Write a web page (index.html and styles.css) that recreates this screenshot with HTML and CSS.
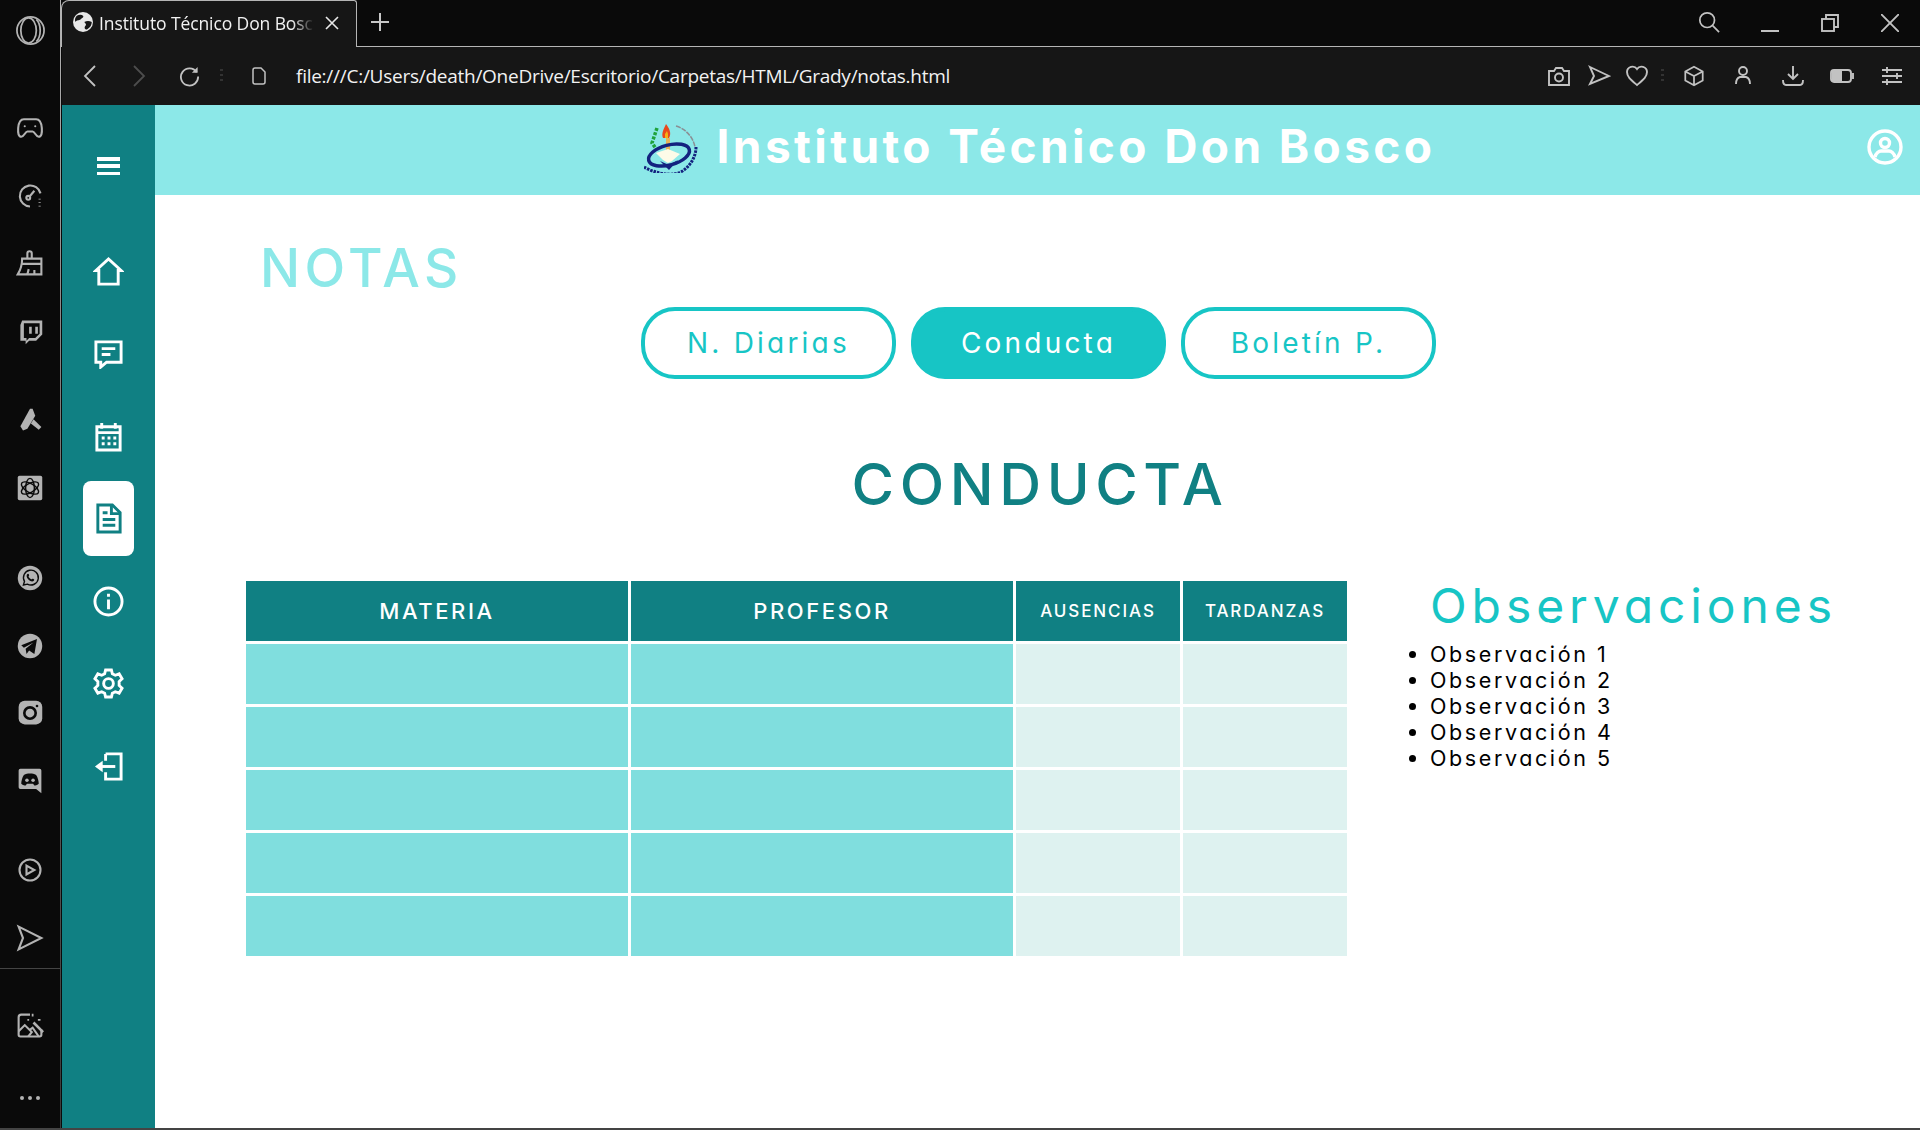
FILE: index.html
```html
<!DOCTYPE html>
<html lang="es">
<head>
<meta charset="UTF-8">
<meta name="viewport" content="width=device-width, initial-scale=1.0">
<title>Instituto Técnico Don Bosco</title>
<link rel="stylesheet" href="styles.css">
</head>
<body>

<div class="window">

    <!-- barra lateral del navegador -->
    <nav class="rail">
        <div class="rail-item">
            <svg class="rail-icon big" viewBox="0 0 32 32"><circle cx="16" cy="16" r="14"/><ellipse cx="14" cy="16" rx="8" ry="13"/><path d="M22 4.500c3 3 4 7 4 11.500s-1 8.500-4 11.500"/></svg>
        </div>

        <div class="rail-group first">
            <div class="rail-item"><svg class="rail-icon" viewBox="0 0 32 32"><path d="M9 6h14c4 0 6 4 6.500 10 .5 6-.5 10-3.500 10-3.500 0-4.500-6-7-6h-6c-2.500 0-3.500 6-7 6-3 0-4-4-3.500-10C3 10 5 6 9 6z"/><circle cx="10" cy="14" r="1.200" class="solid"/><circle cx="22" cy="14" r="1.200" class="solid"/></svg></div>
            <div class="rail-item"><svg class="rail-icon" viewBox="0 0 32 32"><path d="M28 13A12 12 0 1 0 16 28"/><circle cx="14" cy="18" r="2.200"/><path d="M16 16l5-6"/><path d="M27 19v1M27 23v1M27 27v1" stroke-width="2.500"/></svg></div>
            <div class="rail-item"><svg class="rail-icon" viewBox="0 0 32 32"><path d="M13 11V5a2.500 2.500 0 0 1 5 0v6"/><path d="M7 11h22v18H2c3-5 5-11 5-18z"/><path d="M6 17h23M13 29l1.500-6M21 29v-5"/></svg></div>
            <div class="rail-item"><svg class="rail-fill" viewBox="0 0 32 32"><path d="M7 4h23v16l-7 7h-8l-4 4v-4H5V9z"/><path class="cut" d="M9 7h18v12l-5 5h-7l-3 3v-3H9z"/><path d="M15 11h3v8h-3zM22 11h3v8h-3z"/></svg></div>
        </div>

        <div class="rail-group second">
            <div class="rail-item"><svg class="rail-fill" viewBox="0 0 32 32"><path d="M16 3l3 0 3 8-9 15-5 2-3-5z"/><path d="M20 15l9 9-3 3-9-7z"/></svg></div>
            <div class="rail-item"><svg class="rail-fill" viewBox="0 0 32 32"><rect x="2" y="2" width="28" height="28" rx="2"/><g class="knot"><ellipse cx="16" cy="16" rx="5" ry="11"/><ellipse cx="16" cy="16" rx="5" ry="11" transform="rotate(60 16 16)"/><ellipse cx="16" cy="16" rx="5" ry="11" transform="rotate(120 16 16)"/></g></svg></div>
        </div>

        <div class="rail-group third">
            <div class="rail-item"><svg class="rail-fill" viewBox="0 0 32 32"><circle cx="16" cy="16" r="14"/><path class="knot" d="M8.500 24l1.200-4.200A8.500 8.500 0 1 1 13 23z"/><path class="cut" d="M12.500 12c1-1.500 2-1 2.500.5.300 1-1 1.300-.5 2.300.7 1.200 1.500 2 2.800 2.600 1 .4 1.300-1 2.200-.5 1.500.8 2 1.500.5 2.600-3 1.800-9.500-3.500-7.500-7.500z"/></svg></div>
            <div class="rail-item"><svg class="rail-fill" viewBox="0 0 32 32"><circle cx="16" cy="16" r="14"/><path class="cut" d="M6 15l18-7-3 17-6-4-3 4-1-6 9-7-11 6z"/></svg></div>
            <div class="rail-item"><svg class="rail-fill" viewBox="0 0 32 32"><rect x="3" y="2" width="27" height="27" rx="7"/><circle class="knot thick" cx="16" cy="16" r="6.500"/><circle class="cut" cx="24" cy="8" r="1.500"/></svg></div>
            <div class="rail-item"><svg class="rail-fill" viewBox="0 0 32 32"><path d="M5 2h22a2 2 0 0 1 2 2v26l-6-5H5a2 2 0 0 1-2-2V4a2 2 0 0 1 2-2z"/><path class="cut" d="M9 9c4-2 10-2 14 0 2 3 3 7 3 10-2 2-4 2-5 2l-1.500-2h-7L11 21c-1 0-3 0-5-2 0-3 1-7 3-10z"/><circle cx="12.500" cy="15" r="2"/><circle cx="19.500" cy="15" r="2"/></svg></div>
        </div>

        <div class="rail-group fourth">
            <div class="rail-item"><svg class="rail-icon" viewBox="0 0 32 32"><circle cx="16" cy="16" r="12"/><path d="M12 11l9 5-9 5z"/></svg></div>
            <div class="rail-item"><svg class="rail-icon" viewBox="0 0 32 32"><path d="M3 3l26 13L3 29l5-13z"/></svg></div>
        </div>

        <hr class="rail-line">

        <div class="rail-item image-item"><svg class="rail-icon" viewBox="0 0 32 32"><path d="M16 3H6a3 3 0 0 0-3 3v20a2 2 0 0 0 2 2h22a2 2 0 0 0 2-2v-6"/><path d="M3 22l7-7 8 8-4 5M15 21l4-3 7 10"/><path d="M20 12l11 11" stroke-width="3"/><path d="M19 2v3M25 9h3M13 9h2" stroke-width="2"/></svg></div>

        <div class="rail-item rail-more"><span></span><span></span><span></span></div>
    </nav>

    <div class="browser">

        <!-- pestañas -->
        <div class="tabstrip">
            <div class="tab">
                <svg class="favicon" viewBox="0 0 16 16"><circle cx="8" cy="8" r="8" fill="#e8e8e8"/><path d="M3 3c2-1 4-1 5 0 1 1-1 2-2 3S3 6 2 8C1 6 2 4 3 3zM9 8c2-1 4-1 6 0 0 3-2 5-4 6-2 0-2-2-1-3 1-1 0-2-1-3z" fill="#161616"/></svg>
                <span class="tab-title">Instituto Técnico Don Bosco</span>
                <svg class="tab-close" viewBox="0 0 14 14"><path d="M1 1l12 12M13 1L1 13"/></svg>
            </div>
            <svg class="tab-new" viewBox="0 0 18 18"><path d="M9 0v18M0 9h18"/></svg>
            <div class="window-controls">
                <svg class="tool win-search" viewBox="0 0 24 24"><circle cx="10" cy="10" r="8"/><path d="M16 16l7 7"/></svg>
                <span class="win-min"></span>
                <svg class="tool win-box" viewBox="0 0 18 18"><rect x="1" y="5" width="12" height="12"/><path d="M5 5V1h12v12h-4"/></svg>
                <svg class="tool win-box" viewBox="0 0 18 18"><path d="M0 0l18 18M18 0L0 18"/></svg>
            </div>
        </div>

        <!-- barra de direcciones -->
        <div class="toolbar">
            <svg class="tool nav-arrow" viewBox="0 0 14 22"><path d="M12 1L2 11l10 10"/></svg>
            <svg class="tool nav-arrow off" viewBox="0 0 14 22"><path d="M2 1l10 10L2 21"/></svg>
            <svg class="tool nav-reload" viewBox="0 0 22 22"><path d="M18.500 6.500A9 9 0 1 0 20 11"/><path d="M19.500 1v6h-6" class="solid"/></svg>
            <span class="grip"></span>
            <svg class="tool nav-file" viewBox="0 0 14 18"><path d="M1 3a2 2 0 0 1 2-2h6l4 4v10a2 2 0 0 1-2 2H3a2 2 0 0 1-2-2z"/></svg>
            <span class="url">file:///C:/Users/death/OneDrive/Escritorio/Carpetas/HTML/Grady/notas.html</span>

            <div class="toolbar-right">
                <svg class="tool" viewBox="0 0 24 24"><path d="M2 7h5l2-3h6l2 3h5v14H2z"/><circle cx="12" cy="13.500" r="4"/></svg>
                <svg class="tool send" viewBox="0 0 24 24"><path d="M3 3l19 9-19 8 4-8z"/></svg>
                <svg class="tool heart" viewBox="0 0 24 24"><path d="M12 21C6 16 2 13 2 8a5.500 5.500 0 0 1 10-3 5.500 5.500 0 0 1 10 3c0 5-4 8-10 13z"/></svg>
                <span class="grip"></span>
                <svg class="tool cube" viewBox="0 0 24 24"><path d="M12 2l9.500 5v10L12 22l-9.500-5V7zM2.500 7l9.500 5 9.500-5M12 12v10"/></svg>
                <svg class="tool person" viewBox="0 0 24 24"><circle cx="12" cy="7" r="4"/><path d="M5 20c0-4 1-6 4-7h6c3 1 4 3 4 7"/></svg>
                <svg class="tool" viewBox="0 0 24 24"><path d="M12 2v13M7 10l5 5 5-5M2 16c0 3 1 5 3 5h14c2 0 3-2 3-5"/></svg>
                <svg class="tool battery" viewBox="0 0 24 24"><rect x="1" y="6" width="20" height="12" rx="3"/><rect x="2" y="7" width="10" height="10" class="solid"/><path d="M23 9v6"/></svg>
                <svg class="tool" viewBox="0 0 24 24"><path d="M2 6h20M2 12h20M2 18h20M7 3v6M17 9v6M7 15v6"/></svg>
            </div>
        </div>

        <div class="app">

            <aside class="sidebar">
                <div class="menu-toggle"><span></span><span></span><span></span></div>

                <a class="side-link"><svg viewBox="0 0 32 32"><path d="M3 15L16 3l13 12h-3v14H6V15z"/></svg></a>
                <a class="side-link"><svg viewBox="0 0 32 32"><path d="M3 4h26v21H14l-6 5v-5H3z"/><path d="M9 11h14M9 17h9"/></svg></a>
                <a class="side-link"><svg viewBox="0 0 32 32"><path d="M4 6h24v24H4zM4 12h24M9 2v6M23 2v6"/><path class="dots" d="M9 16h3v3H9zM15 16h3v3h-3zM21 16h3v3h-3zM9 22h3v3H9zM15 22h3v3h-3zM21 22h3v3h-3z"/></svg></a>
                <a class="side-link active"><svg viewBox="0 0 32 32"><path d="M5 2h15l8 8v20H5z"/><path d="M19 2v9h9"/><path d="M10 10h5M10 17h13M10 23h13"/></svg></a>
                <a class="side-link"><svg viewBox="0 0 32 32"><circle cx="16" cy="16" r="14"/><path d="M16 14v10M16 8v3"/></svg></a>
                <a class="side-link"><svg viewBox="0 0 32 32"><path d="M13 2h6l1 4 3 1.500 4-1.500 3 5-3 3v4l3 3-3 5-4-1.500-3 1.500-1 4h-6l-1-4-3-1.500L5 26l-3-5 3-3v-4l-3-3 3-5 4 1.500L12 6z"/><circle cx="16" cy="16" r="5"/></svg></a>
                <a class="side-link"><svg viewBox="0 0 32 32"><path d="M13 3h16v26H13v-7M13 10V3"/><path d="M23 16H5"/><path class="dots" d="M2 16l8-6v12z"/></svg></a>
            </aside>

            <div class="content">
                <header class="site-header">
                    <svg class="school-logo" viewBox="0 0 54 50">
                        <path d="M13 5L8 20l5 7" fill="none" stroke="#1fa23b" stroke-width="3.500" stroke-dasharray="3 1.500"/>
                        <path d="M32 3c10 3 17 11 19 21" fill="none" stroke="#8a8f94" stroke-width="1.500" stroke-dasharray="5 1"/>
                        <path d="M19 15c-2-5 1-9 3-14 3 4 6 9 3 14z" fill="#e8481c"/>
                        <path d="M21 15l0-4 2-3 1 3 0 4z" fill="#f6b012"/>
                        <rect x="22" y="15" width="4" height="13" fill="#e7b35a"/>
                        <ellipse cx="25" cy="32" rx="21" ry="10" fill="none" stroke="#13227f" stroke-width="3.500" transform="rotate(-15 25 32)"/>
                        <path d="M12 30l12-4 12 5-8 7-4 2-5-3z" fill="#fdfbe8"/>
                        <path d="M16 38l9 9 9-10-9 5z" fill="#13227f"/>
                        <path d="M0 44c10 6 30 11 40 3 8-6 12-15 12-23" fill="none" stroke="#13227f" stroke-width="3" stroke-dasharray="2.500 1"/>
                    </svg>
                    <span class="site-title">Instituto Técnico Don Bosco</span>
                    <svg class="user-icon" viewBox="0 0 36 36"><circle cx="18" cy="18" r="16"/><circle cx="18" cy="14" r="4.500"/><path d="M8 28c1-4 4-6 6-6h8c2 0 5 2 6 6"/></svg>
                </header>

                <main class="notas">
                    <h1 class="page-title">NOTAS</h1>

                    <div class="tabs">
                        <a class="tab-button">N. Diarias</a>
                        <a class="tab-button selected">Conducta</a>
                        <a class="tab-button">Boletín P.</a>
                    </div>

                    <h2 class="section-title">CONDUCTA</h2>

                    <div class="section-body">
                        <table class="grades">
                            <thead>
                                <tr>
                                    <th class="wide">MATERIA</th>
                                    <th class="wide">PROFESOR</th>
                                    <th class="narrow">AUSENCIAS</th>
                                    <th class="narrow">TARDANZAS</th>
                                </tr>
                            </thead>
                            <tbody>
                                <tr><td></td><td></td><td class="pale"></td><td class="pale"></td></tr>
                                <tr><td></td><td></td><td class="pale"></td><td class="pale"></td></tr>
                                <tr><td></td><td></td><td class="pale"></td><td class="pale"></td></tr>
                                <tr><td></td><td></td><td class="pale"></td><td class="pale"></td></tr>
                                <tr><td></td><td></td><td class="pale"></td><td class="pale"></td></tr>
                            </tbody>
                        </table>

                        <section class="observaciones">
                            <h3>Observaciones</h3>
                            <ul>
                                <li>Observación 1</li>
                                <li>Observación 2</li>
                                <li>Observación 3</li>
                                <li>Observación 4</li>
                                <li>Observación 5</li>
                            </ul>
                        </section>
                    </div>
                </main>
            </div>
        </div>
    </div>
</div>
<div class="bottom-line"></div>

</body>
</html>
```

FILE: styles.css
```css
* {
    box-sizing: border-box;
}
html, body {
    margin: 0;
    padding: 0;
    height: 1130px;
    overflow: hidden;
    background-color: #0a0a0a;
}
.window {
    display: flex;
    height: 1128px;
}
.bottom-line {
    height: 2px;
    background-color: #444;
}

/* barra lateral del navegador */
.rail {
    width: 62px;
    flex-shrink: 0;
    display: flex;
    flex-direction: column;
    background-color: #0a0a0a;
    border-right: 2px solid transparent;
    background-image: linear-gradient(#b5b5b5, #777 40%, #3a3a3a);
    background-size: 1px 100%;
    background-repeat: no-repeat;
    background-position: 60px 0;
}
.rail-item {
    width: 60px;
    height: 60px;
    display: flex;
    align-items: center;
    justify-content: center;
    flex-shrink: 0;
}
.rail-group {
    display: flex;
    flex-direction: column;
    gap: 7.5px;
}
.rail-group.first { margin-top: 38px; }
.rail-group.second { margin-top: 29.5px; }
.rail-group.third { margin-top: 30.5px; }
.rail-group.fourth { margin-top: 29.5px; }
.rail-icon {
    width: 28px;
    height: 28px;
    fill: none;
    stroke: #b3b3b3;
    stroke-width: 2.4;
}
.rail-icon.big {
    width: 31px;
    height: 31px;
    stroke-width: 1.8;
}
.rail-icon .solid {
    fill: #b3b3b3;
    stroke: none;
}
.rail-fill {
    width: 28px;
    height: 28px;
    fill: #b3b3b3;
}
.rail-fill .cut {
    fill: #0a0a0a;
}
.rail-fill .knot {
    fill: none;
    stroke: #0a0a0a;
    stroke-width: 1.6;
}
.rail-fill .knot.thick {
    stroke-width: 3;
}
.rail-line {
    width: 60px;
    height: 1px;
    margin: 0.5px 0 0;
    border: 0;
    background-color: #444;
}
.image-item {
    margin-top: 26.5px;
}
.rail-more {
    margin-top: auto;
    gap: 4px;
}
.rail-more span {
    width: 4px;
    height: 4px;
    border-radius: 50%;
    background-color: #b3b3b3;
}

.browser {
    flex: 1;
    display: flex;
    flex-direction: column;
    min-width: 0;
}

/* iconos de la barra */
.tool {
    width: 24px;
    height: 24px;
    flex-shrink: 0;
    fill: none;
    stroke: #c2c2c2;
    stroke-width: 1.9;
}
.tool .solid {
    fill: #c2c2c2;
    stroke: none;
}

/* pestañas */
.tabstrip {
    height: 47px;
    position: relative;
    display: flex;
    align-items: flex-start;
    background-color: #0a0a0a;
    border-bottom: 1px solid #b5b5b5;
    margin-left: -1px;
}
.tab {
    width: 296px;
    height: 47px;
    padding: 0 0 0 11px;
    display: flex;
    align-items: center;
    color: #f2f2f2;
    background-color: #161616;
    border: 1px solid #b5b5b5;
    border-bottom: 0;
    border-left: 1px solid #b5b5b5;
    border-top-right-radius: 3px;
    border-top-left-radius: 8px;
}
.favicon {
    width: 20px;
    height: 20px;
    flex-shrink: 0;
    margin-top: -4px;
}
.tab-title {
    margin-left: 6px;
    width: 215px;
    flex-shrink: 0;
    margin-top: -2px;
    font-family: "Open Sans", sans-serif;
    font-size: 17.5px;
    letter-spacing: -0.1px;
    white-space: nowrap;
    overflow: hidden;
    -webkit-mask-image: linear-gradient(90deg, #000 90%, transparent);
    mask-image: linear-gradient(90deg, #000 90%, transparent);
}
.tab-close {
    width: 14px;
    height: 14px;
    flex-shrink: 0;
    margin-left: 11px;
    margin-top: -2px;
    fill: none;
    stroke: #e8e8e8;
    stroke-width: 1.6;
}
.tab-new {
    width: 18px;
    height: 18px;
    margin: 13px 0 0 14px;
    fill: none;
    stroke: #c8c8c8;
    stroke-width: 2;
}
.window-controls {
    margin-left: auto;
    display: flex;
    align-items: center;
    height: 46px;
}
.win-search {
    width: 22px;
    height: 22px;
    margin-top: -2px;
    margin-right: 41px;
}
.win-min {
    width: 18px;
    height: 2px;
    margin-top: 16px;
    margin-right: 42px;
    background-color: #c2c2c2;
}
.win-box {
    width: 18px;
    height: 18px;
    margin-right: 42px;
}
.win-box:last-child {
    margin-right: 21px;
}

/* barra de direcciones */
.toolbar {
    height: 58px;
    display: flex;
    align-items: center;
    background-color: #161616;
}
.nav-arrow {
    width: 14px;
    height: 22px;
    margin-left: 21px;
    stroke-width: 1.8;
}
.nav-arrow.off {
    margin-left: 35px;
    stroke: #4d4d4d;
}
.nav-reload {
    width: 21px;
    height: 21px;
    margin-left: 33px;
}
.grip {
    width: 3px;
    height: 14px;
    flex-shrink: 0;
    background-image: linear-gradient(#333 50%, transparent 50%);
    background-size: 3px 5px;
}
.toolbar > .grip {
    margin-left: 20px;
}
.nav-file {
    width: 14px;
    height: 18px;
    margin-left: 29px;
    stroke-width: 1.5;
}
.url {
    margin-left: 30px;
    color: #f2f2f2;
    font-family: "Open Sans", sans-serif;
    font-size: 19px;
    letter-spacing: -0.26px;
    white-space: nowrap;
}
.toolbar-right {
    margin-left: auto;
    padding-right: 16px;
    display: flex;
    align-items: center;
}
.toolbar-right .send { margin-left: 16px; }
.toolbar-right .heart { margin-left: 14px; }
.toolbar-right .grip { margin-left: 12px; }
.toolbar-right .cube { margin-left: 19px; width: 22px; }
.toolbar-right .person { margin-left: 26px; }
.toolbar-right .person ~ .tool { margin-left: 26px; }
.toolbar-right .person ~ .battery { margin-left: 25px; }

/* aplicacion */
.app {
    flex: 1;
    display: flex;
    min-height: 0;
    background-color: #fff;
}
.sidebar {
    width: 93px;
    flex-shrink: 0;
    padding-top: 52px;
    display: flex;
    flex-direction: column;
    align-items: center;
    gap: 7.5px;
    background-color: #108083;
}
.menu-toggle {
    width: 23px;
    height: 18px;
    margin-bottom: 51px;
    display: flex;
    flex-direction: column;
    justify-content: space-between;
}
.menu-toggle span {
    height: 3.5px;
    background-color: #fff;
}
.side-link {
    width: 51px;
    height: 75px;
    display: flex;
    align-items: center;
    justify-content: center;
    border-radius: 8px;
}
.side-link svg {
    width: 31px;
    height: 31px;
    fill: none;
    stroke: #fff;
    stroke-width: 3;
}
.side-link .dots {
    fill: #fff;
    stroke: none;
}
.side-link.active {
    background-color: #fff;
}
.side-link.active svg {
    stroke: #108083;
}
.content {
    flex: 1;
    min-width: 0;
    font-family: "Inter", sans-serif;
    font-feature-settings: "cv11";
}
.site-header {
    height: 90px;
    position: relative;
    display: flex;
    align-items: center;
    justify-content: center;
    gap: 19px;
    padding-left: 4px;
    background-color: #8ce8e8;
}
.school-logo {
    width: 54px;
    height: 50px;
    flex-shrink: 0;
    margin-bottom: 4px;
}
.site-title {
    margin-bottom: 8px;
    color: #fff;
    font-size: 46px;
    font-weight: 700;
    letter-spacing: 3.4px;
}
.user-icon {
    position: absolute;
    right: 17px;
    top: 24px;
    width: 36px;
    height: 36px;
    fill: none;
    stroke: #fff;
    stroke-width: 3.4;
}

/* notas */
.notas {
    padding-top: 42px;
}
.page-title {
    margin: 0 0 0 105px;
    color: #8ce8e8;
    font-size: 53px;
    font-weight: 500;
    line-height: 62px;
    letter-spacing: 4.4px;
}
.tabs {
    margin-top: 8px;
    padding-left: 2px;
    display: flex;
    justify-content: center;
    gap: 15px;
}
.tab-button {
    width: 255px;
    height: 72px;
    display: flex;
    align-items: center;
    justify-content: center;
    color: #17c5c5;
    font-size: 28px;
    font-weight: 400;
    letter-spacing: 3.2px;
    border: 4px solid #17c5c5;
    border-radius: 34px;
}
.tab-button.selected {
    color: #fff;
    background-color: #17c5c5;
}
.section-title {
    margin: 70px 0 0;
    padding-left: 5px;
    color: #108083;
    text-align: center;
    font-size: 58px;
    font-weight: 500;
    line-height: 70px;
    letter-spacing: 5.6px;
}
.section-body {
    margin-top: 59px;
    margin-left: 88px;
    display: flex;
    align-items: flex-start;
}
.grades {
    border-collapse: separate;
    border-spacing: 3px;
    table-layout: fixed;
    width: 1107px;
    flex-shrink: 0;
}
.grades th, .grades td {
    height: 60px;
    padding: 0;
}
.grades th {
    color: #fff;
    background-color: #108083;
    font-weight: 500;
    text-align: center;
}
.grades th.wide {
    width: 382px;
    font-size: 22px;
    letter-spacing: 2.6px;
}
.grades th.narrow {
    width: 164px;
    font-size: 17px;
    letter-spacing: 1.9px;
}
.grades td {
    background-color: #80dede;
}
.grades td.pale {
    background-color: #def2f0;
}
.observaciones {
    margin-left: 47px;
}
.observaciones h3 {
    margin: 0 0 0 33px;
    color: #17c5c5;
    font-size: 48px;
    font-weight: 400;
    line-height: 56px;
    letter-spacing: 4.9px;
    white-space: nowrap;
}
.observaciones ul {
    margin: 7px 0 0;
    padding-left: 33px;
}
.observaciones li {
    color: #000;
    font-size: 21.5px;
    line-height: 26.1px;
    letter-spacing: 2.6px;
}
```
